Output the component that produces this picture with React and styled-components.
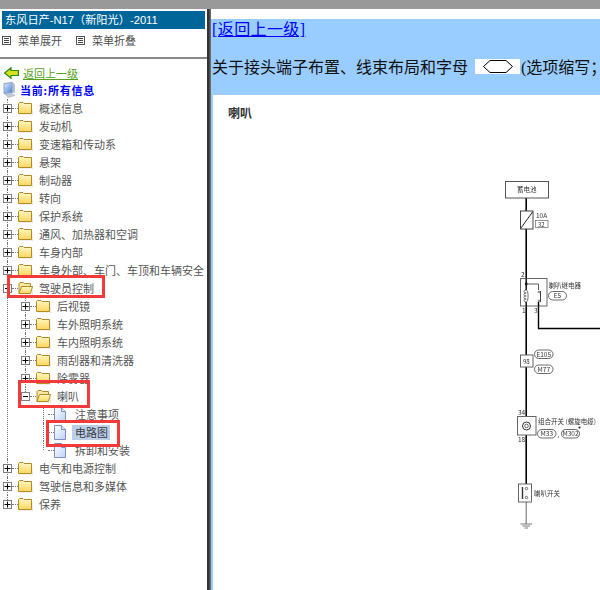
import React from "react";
import styled, { createGlobalStyle } from "styled-components";

const CJK = `"Noto Sans CJK SC", "Liberation Sans", sans-serif`;
const SERIF = `"Liberation Serif", "Noto Sans CJK SC", serif`;

const GlobalStyle = createGlobalStyle`
  html, body {
    margin: 0;
    padding: 0;
    background: #fff;
    overflow: hidden;
  }
`;

const Page = styled.div`
  width: 600px;
  height: 590px;
  overflow: hidden;
  display: flex;
  flex-direction: column;
  font-family: ${CJK};
`;

const TopBar = styled.div`
  height: 9px;
  flex: none;
  background: #999;
`;

const Main = styled.div`
  flex: 1;
  display: flex;
  min-height: 0;
`;

const Sidebar = styled.div`
  width: 207px;
  flex: none;
  padding-top: 2px;
  box-sizing: border-box;
  background: #fff;
`;

const Title = styled.div`
  margin: 0 2px;
  height: 18px;
  line-height: 18px;
  padding-left: 3px;
  background: #006699;
  color: #fff;
  font-size: 11.2px;
  white-space: nowrap;
  font-family: "Liberation Sans", "Noto Sans CJK SC", sans-serif;
`;

const MenuBar = styled.div`
  height: 22px;
  padding: 0 0 6px 2px;
  display: flex;
  align-items: center;
  gap: 14px;
`;

const MenuItem = styled.div`
  display: flex;
  align-items: center;
  gap: 7px;
  font-size: 11px;
  color: #505050;
`;

const Rule = styled.div`
  height: 2px;
  background: #888;
`;

const ReturnRow = styled.div`
  margin-top: 6px;
  height: 16px;
  padding-left: 4px;
  display: flex;
  align-items: center;
  gap: 4px;
`;

const ReturnLink = styled.a`
  font-size: 11px;
  color: #55a01a;
  text-decoration: underline;
`;

const CurrentRow = styled.div`
  height: 18px;
  padding-left: 3px;
  display: flex;
  align-items: center;
  gap: 4px;
  font-size: 11px;
  font-weight: 700;
  letter-spacing: 0.8px;
  color: #0000ff;
`;

const Tree = styled.div`
  position: relative;
`;

const Node = styled.div`
  position: relative;
  &::before {
    content: "";
    position: absolute;
    left: 7px;
    top: 0;
    width: 0;
    border-left: 1px dotted #777;
    ${(p) => (p.$last ? "height: 9px;" : "bottom: 0;")}
  }
`;

const Branch = styled.div`
  padding-left: 18px;
`;

const Row = styled.div`
  position: relative;
  height: 18px;
  display: flex;
  align-items: center;
  padding-left: 3px;
  white-space: nowrap;
`;

const Toggle = styled.span`
  width: 9px;
  height: 9px;
  box-sizing: border-box;
  flex: none;
  border: 1px solid #808080;
  background: #fff;
  display: flex;
  align-items: center;
  justify-content: center;
  font-size: 0;
  color: #000;
`;

const Spacer = styled.span`
  width: 9px;
  flex: none;
`;

const Stub = styled.span`
  width: 6px;
  flex: none;
  border-top: 1px dotted #777;
`;

const Label = styled.span`
  margin-left: ${(p) => (p.$leaf ? "8px" : "5px")};
  padding: 0 1px;
  font-size: 11px;
  line-height: 15px;
  color: #555;
  background: ${(p) => (p.$selected ? "#bccfea" : "transparent")};
  ${(p) => p.$selected && "padding: 0 2px 0 3px; margin-left: 6px; color: #3a3a3a;"}
`;

const Marker = styled.div`
  position: absolute;
  box-sizing: border-box;
  border: 3px solid #f23a3a;
  left: ${(p) => p.$x}px;
  top: ${(p) => p.$y}px;
  width: ${(p) => p.$w}px;
  height: ${(p) => p.$h}px;
`;

const Divider = styled.div`
  width: 4px;
  flex: none;
  background: linear-gradient(to right, #333 0, #333 2px, #6a6a6a 3px, #6a6a6a 4px);
`;

const Content = styled.div`
  flex: 1;
  min-width: 0;
  display: flex;
  flex-direction: column;
  padding-top: 10px;
  background: #fff;
`;

const Header = styled.div`
  height: 76px;
  flex: none;
  box-sizing: border-box;
  padding: 1px 0 0 1px;
  background: #99ccff;
  font-family: ${SERIF};
  font-size: 16px;
  white-space: nowrap;
  overflow: hidden;
`;

const BackLink = styled.a`
  display: block;
  line-height: 19px;
  letter-spacing: 0.4px;
  color: #0000ff;
  text-decoration: underline;
`;

const Notice = styled.div`
  margin-top: 17px;
  height: 20px;
  display: flex;
  align-items: center;
  color: #111;
`;

const HexBox = styled.span`
  width: 45px;
  height: 15px;
  margin: 0 1px 0 7px;
  flex: none;
  background: #fff;
  display: flex;
  align-items: center;
  justify-content: center;
`;

const Body = styled.div`
  flex: 1;
  min-height: 0;
  border-left: 2px solid #99ccff;
  padding: 10px 0 0 15px;
  background: #fff;
`;

const Heading = styled.div`
  height: 16px;
  line-height: 16px;
  font-size: 12px;
  font-weight: 700;
  color: #333;
`;

const Diagram = styled.svg`
  display: block;
  margin: 53px 0 0 252px;
  filter: blur(0.3px);
  font-family: ${CJK};
`;

const tree = [
  { t: "概述信息" },
  { t: "发动机" },
  { t: "变速箱和传动系" },
  { t: "悬架" },
  { t: "制动器" },
  { t: "转向" },
  { t: "保护系统" },
  { t: "通风、加热器和空调" },
  { t: "车身内部" },
  { t: "车身外部、车门、车顶和车辆安全" },
  {
    t: "驾驶员控制",
    open: true,
    kids: [
      { t: "后视镜" },
      { t: "车外照明系统" },
      { t: "车内照明系统" },
      { t: "雨刮器和清洗器" },
      { t: "除雾器" },
      {
        t: "喇叭",
        open: true,
        kids: [
          { t: "注意事项", leaf: true },
          { t: "电路图", leaf: true, selected: true },
          { t: "拆卸和安装", leaf: true },
        ],
      },
    ],
  },
  { t: "电气和电源控制" },
  { t: "驾驶信息和多媒体" },
  { t: "保养" },
];

const MenuIcon = () => (
  <svg width="9" height="9" viewBox="0 0 9 9">
    <rect x="0.5" y="0.5" width="8" height="8" fill="#fff" stroke="#555" />
    <path d="M2 2.5h5M2 4.5h5M2 6.5h5" stroke="#444" />
  </svg>
);

const BackArrow = () => (
  <svg width="15" height="12" viewBox="0 0 15 12">
    <path d="M0.7 6 L7 0.7 V3.5 H14.4 V8.5 H7 V11.3 Z" fill="#d8e020" stroke="#2f8a10" strokeWidth="1.2" />
  </svg>
);

const Computer = () => (
  <svg width="13" height="16" viewBox="0 0 13 16">
    <defs>
      <linearGradient id="screen" x1="0" y1="0" x2="1" y2="1">
        <stop offset="0" stopColor="#e4effc" />
        <stop offset="1" stopColor="#3f7fd8" />
      </linearGradient>
    </defs>
    <path d="M1 1.5 L9.5 0.5 V10.5 L1 11.5 Z" fill="url(#screen)" stroke="#8fa2c0" />
    <path d="M9.5 0.5 L12 2 V11 L9.5 10.5 Z" fill="#b6c2d4" />
    <path d="M2 12 L9 11.5 L12 13.5 L5 15.5 Z" fill="#c3cbd8" stroke="#98a3b5" strokeWidth="0.5" />
  </svg>
);

const Folder = ({ open }) => (
  <svg width="15" height="14" viewBox="0 0 15 14" style={{ flex: "none" }}>
    <defs>
      <linearGradient id="folderFill" x1="0" y1="0" x2="0" y2="1">
        <stop offset="0" stopColor="#fff7c4" />
        <stop offset="1" stopColor="#fbd75e" />
      </linearGradient>
    </defs>
    <path d="M14.5 13.5 H1 L2 13.8 H15 V3 Z" fill="#cfc8b4" />
    {open ? (
      <>
        <path d="M1 12.5 V2.5 L2 1.5 H5.5 L6.5 2.5 H12.5 V5" fill="#f7e7a4" stroke="#b48a26" />
        <path d="M1 12.5 L3.5 5.5 H14.5 L12.5 12.5 Z" fill="url(#folderFill)" stroke="#b48a26" />
      </>
    ) : (
      <path
        d="M0.5 12.5 V2.5 L1.5 1.5 H5 L6 2.5 H13.5 V12.5 Z"
        fill="url(#folderFill)"
        stroke="#b48a26"
      />
    )}
  </svg>
);

const Doc = () => (
  <svg width="12" height="15" viewBox="0 0 12 15" style={{ flex: "none" }}>
    <defs>
      <linearGradient id="docFill" x1="0" y1="0" x2="1" y2="1">
        <stop offset="0" stopColor="#ffffff" />
        <stop offset="1" stopColor="#bcd3f4" />
      </linearGradient>
    </defs>
    <path d="M0.5 0.5 H7.5 L11.5 4.5 V14.5 H0.5 Z" fill="url(#docFill)" stroke="#7d8fc4" />
    <path d="M7.5 0.5 V4.5 H11.5" fill="#dfe8f8" stroke="#7d8fc4" />
  </svg>
);

const ToggleGlyph = ({ open }) => (
  <svg width="7" height="7" viewBox="0 0 7 7">
    <path d={open ? "M1 3.5h5" : "M0.5 3.5h6M3.5 0.5v6"} stroke="#000" />
  </svg>
);

const TreeNode = ({ item, last }) => (
  <Node $last={last}>
    <Row>
      {item.leaf ? (
        <Spacer />
      ) : (
        <Toggle>
          <ToggleGlyph open={item.open} />
        </Toggle>
      )}
      <Stub />
      {item.leaf ? <Doc /> : <Folder open={item.open} />}
      <Label $leaf={item.leaf} $selected={item.selected}>
        {item.t}
      </Label>
    </Row>
    {item.kids && (
      <Branch>
        {item.kids.map((kid, i) => (
          <TreeNode key={kid.t} item={kid} last={i === item.kids.length - 1} />
        ))}
      </Branch>
    )}
  </Node>
);

const Pill = ({ x, y, w, children }) => (
  <g>
    <rect x={x} y={y} width={w} height="8.5" rx="4.2" fill="#fff" stroke="#444" strokeWidth="0.8" />
    <text x={x + w / 2} y={y + 6.6} fontSize="6.5" textAnchor="middle" fill="#333">
      {children}
    </text>
  </g>
);

const Small = ({ x, y, size = 6.5, children }) => (
  <text x={x} y={y} fontSize={size} fill="#333">
    {children}
  </text>
);

const Wiring = () => (
  <Diagram width="120" height="375" viewBox="480 175 120 375">
    <path d="M526.2 199 V485" stroke="#000" strokeWidth="1.6" fill="none" />
    <path d="M526.2 503 V525" stroke="#444" strokeWidth="0.8" fill="none" />
    <path d="M538.5 307 V329.5 H600" stroke="#000" strokeWidth="1.4" fill="none" />

    <rect x="505.5" y="182.5" width="43" height="16.5" fill="#fff" stroke="#555" />
    <Small x="517" y="193" size="6.5">蓄电池</Small>

    <rect x="520.5" y="212" width="12.5" height="18" fill="#fff" stroke="#444" />
    <path d="M521 229 L532.5 213" stroke="#222" />
    <Small x="536" y="219" size="6.5">10A</Small>
    <rect x="535.5" y="221.5" width="12.5" height="7" fill="#fff" stroke="#666" strokeWidth="0.7" />
    <Small x="538" y="227.5" size="6">32</Small>

    <Small x="521" y="278" size="6.5">2</Small>
    <rect x="520.5" y="279.5" width="26.5" height="27.5" fill="#fff" stroke="#666" />
    <path d="M526.2 279.5 V291 M526.2 303 V307" stroke="#000" strokeWidth="1.4" />
    <circle cx="526.2" cy="285" r="1.4" fill="#111" />
    <path d="M526.2 285 H538.5 V291" stroke="#333" strokeWidth="0.8" fill="none" />
    <path
      d="M526.2 291 c-3 0 -3 3 0 3 c-3 0 -3 3 0 3 c-3 0 -3 3 0 3 c-3 0 -3 3 0 3 M526.2 291 c2.5 0 2.5 12 0 12"
      stroke="#333"
      strokeWidth="0.7"
      fill="none"
    />
    <circle cx="539" cy="293" r="1" fill="#fff" stroke="#333" strokeWidth="0.6" />
    <circle cx="539" cy="302" r="1" fill="#fff" stroke="#333" strokeWidth="0.6" />
    <path d="M540.5 292 V303" stroke="#333" strokeWidth="0.9" />
    <path d="M538.5 303 V307" stroke="#000" strokeWidth="1.4" />
    <Small x="548.5" y="289" size="6.5">喇叭继电器</Small>
    <Pill x={548.5} y={292.5} w={18}>E5</Pill>
    <Small x="522" y="314" size="6.5">1</Small>
    <Small x="534" y="314" size="6.5">3</Small>

    <rect x="520.5" y="356" width="12.5" height="12" fill="#fff" stroke="#666" />
    <Small x="523" y="365" size="6">98</Small>
    <Pill x={534.5} y={351} w={18.5}>E105</Pill>
    <Pill x={534.5} y={366} w={18.5}>M77</Pill>

    <Small x="518" y="416" size="6.5">34</Small>
    <rect x="517.5" y="417.5" width="18.5" height="18.5" fill="#fff" stroke="#666" />
    <circle cx="526.5" cy="427" r="4" fill="#fff" stroke="#333" />
    <circle cx="526.5" cy="427" r="1.8" fill="#fff" stroke="#333" strokeWidth="0.7" />
    <Small x="518" y="443" size="6.5">18</Small>
    <Small x="538" y="425" size="6.5">组合开关 (螺旋电缆)</Small>
    <Pill x={537.5} y={430.5} w={18.5}>M33</Pill>
    <Small x="557.5" y="438" size="6">,</Small>
    <Pill x={561.5} y={430.5} w={18}>M302</Pill>
    <circle cx="579.5" cy="428.5" r="1.1" fill="#222" />

    <rect x="518.5" y="485" width="13" height="18" fill="#fff" stroke="#666" />
    <path d="M522.5 488 V500" stroke="#333" strokeWidth="1.4" />
    <circle cx="526.5" cy="489.5" r="1.2" fill="#fff" stroke="#333" strokeWidth="0.7" />
    <circle cx="526.5" cy="498.5" r="1.2" fill="#fff" stroke="#333" strokeWidth="0.7" />
    <Small x="534" y="497" size="6.5">喇叭开关</Small>

    <path d="M520.5 525 H532 M522.5 527 H530 M524.5 529 H528" stroke="#555" strokeWidth="0.8" />
  </Diagram>
);

export default function App() {
  return (
    <Page>
      <GlobalStyle />
      <TopBar />
      <Main>
        <Sidebar>
          <Title>东风日产-N17（新阳光）-2011</Title>
          <MenuBar>
            <MenuItem>
              <MenuIcon />
              菜单展开
            </MenuItem>
            <MenuItem>
              <MenuIcon />
              菜单折叠
            </MenuItem>
          </MenuBar>
          <Rule />
          <ReturnRow>
            <BackArrow />
            <ReturnLink>返回上一级</ReturnLink>
          </ReturnRow>
          <CurrentRow>
            <Computer />
            当前:所有信息
          </CurrentRow>
          <Tree>
            {tree.map((item, i) => (
              <TreeNode key={item.t} item={item} last={i === tree.length - 1} />
            ))}
            <Marker $x={7} $y={176} $w={98} $h={23} />
            <Marker $x={18} $y={281} $w={72} $h={28} />
            <Marker $x={46} $y={321} $w={74} $h={27} />
          </Tree>
        </Sidebar>
        <Divider />
        <Content>
          <Header>
            <BackLink>[返回上一级]</BackLink>
            <Notice>
              关于接头端子布置、线束布局和字母
              <HexBox>
                <svg width="30" height="15" viewBox="0 0 30 15">
                  <path d="M0.5 7.5 L7 1.5 H23 L29.5 7.5 L23 13.5 H7 Z" fill="#fff" stroke="#000" />
                </svg>
              </HexBox>
              (选项缩写；
            </Notice>
          </Header>
          <Body>
            <Heading>喇叭</Heading>
            <Wiring />
          </Body>
        </Content>
      </Main>
    </Page>
  );
}
